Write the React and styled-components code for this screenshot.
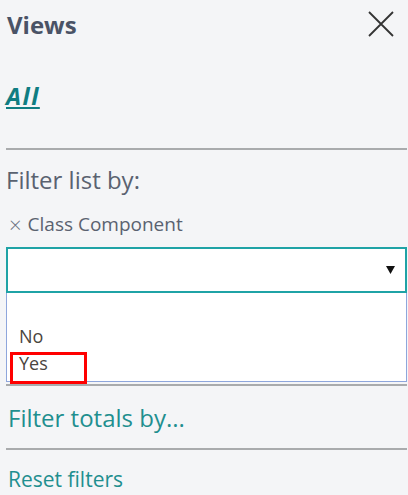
import React from 'react';
import styled, { createGlobalStyle } from 'styled-components';

const GlobalStyle = createGlobalStyle`
	html, body {
		margin: 0;
		padding: 0;
		background: #f4f5f7;
	}
	body {
		font-family: 'Open Sans', 'Noto Sans', sans-serif;
	}
`;

const Panel = styled.div`
	width: 408px;
	height: 495px;
	box-sizing: border-box;
	padding: 0 1px 0 6px;
	background: #f4f5f7;
	overflow: hidden;
`;

const Header = styled.div`
	display: flex;
	justify-content: space-between;
	align-items: flex-start;
	height: 81px;
`;

const Title = styled.h2`
	margin: 10px 0 0 1px;
	font-size: 24px;
	font-weight: 700;
	color: #4a5366;
	line-height: 30px;
`;

const CloseButton = styled.button`
	display: flex;
	padding: 0;
	margin: 11px 13px 0 0;
	border: none;
	background: none;
	cursor: pointer;
`;

const ViewLink = styled.a`
	display: inline-block;
	font-size: 24px;
	font-weight: 700;
	font-style: italic;
	letter-spacing: 1.5px;
	color: #0f7d82;
	text-decoration: underline;
	text-decoration-thickness: 2px;
	text-underline-offset: 2px;
	line-height: 30px;
`;

const Divider = styled.hr`
	margin: ${(p) => p.$top || 0}px 0 0;
	border: none;
	border-top: 2px solid #a9abad;
`;

const SectionLabel = styled.div`
	margin-top: 15px;
	font-size: 24px;
	color: #5a6270;
	line-height: 30px;
`;

const Chip = styled.div`
	display: flex;
	align-items: center;
	gap: 6px;
	margin-top: 17px;
	padding-left: 3px;
	font-size: 19px;
	color: #5a6270;
	line-height: 24px;
`;

const ChipX = styled.span`
	font-size: 22px;
	font-weight: 300;
	color: #6b7280;
`;

const SelectBox = styled.div`
	display: flex;
	justify-content: flex-end;
	align-items: center;
	margin-top: 11px;
	height: 42px;
	padding-right: 10px;
	border: 2px solid #1fa3a6;
	background: #fff;
`;

const OptionList = styled.div`
	display: flex;
	flex-direction: column;
	justify-content: flex-end;
	height: 89px;
	box-sizing: border-box;
	padding-bottom: 4px;
	border: 1px solid #8ea6dc;
	border-top: none;
	background: #fff;
`;

const Option = styled.div`
	position: relative;
	padding-left: 12px;
	font-size: 18px;
	line-height: 27px;
	color: #4a4540;

	${(p) =>
		p.$marked &&
		`
		&::after {
			content: '';
			position: absolute;
			top: 2px;
			left: 3px;
			width: 77px;
			height: 32px;
			box-sizing: border-box;
			border: 3px solid #ff0000;
		}
	`}
`;

const ActionLink = styled.a`
	display: block;
	margin-top: ${(p) => p.$top}px;
	padding-left: 2px;
	font-size: ${(p) => p.$size}px;
	color: #1f8f8f;
	line-height: ${(p) => p.$line}px;
	cursor: pointer;
`;

const XIcon = () => (
	<svg width="26" height="26" viewBox="0 0 26 26">
		<path d="M1 1 L25 25 M25 1 L1 25" stroke="#333" strokeWidth="1.8" fill="none" />
	</svg>
);

const Caret = () => (
	<svg width="9" height="8" viewBox="0 0 9 8">
		<path d="M0 0 H9 L4.5 8 Z" fill="#111" />
	</svg>
);

export default function App() {
	return (
		<>
			<GlobalStyle />
			<Panel>
				<Header>
					<Title>Views</Title>
					<CloseButton aria-label="Close">
						<XIcon />
					</CloseButton>
				</Header>
				<ViewLink>All</ViewLink>
				<Divider $top={37} />
				<SectionLabel>Filter list by:</SectionLabel>
				<Chip>
					<ChipX>×</ChipX>
					Class Component
				</Chip>
				<SelectBox>
					<Caret />
				</SelectBox>
				<OptionList>
					<Option>No</Option>
					<Option $marked>Yes</Option>
				</OptionList>
				<Divider $top={2} />
				<ActionLink $top={17} $size={24} $line={30}>Filter totals by...</ActionLink>
				<Divider $top={15} />
				<ActionLink $top={15} $size={21} $line={28}>Reset filters</ActionLink>
			</Panel>
		</>
	);
}
